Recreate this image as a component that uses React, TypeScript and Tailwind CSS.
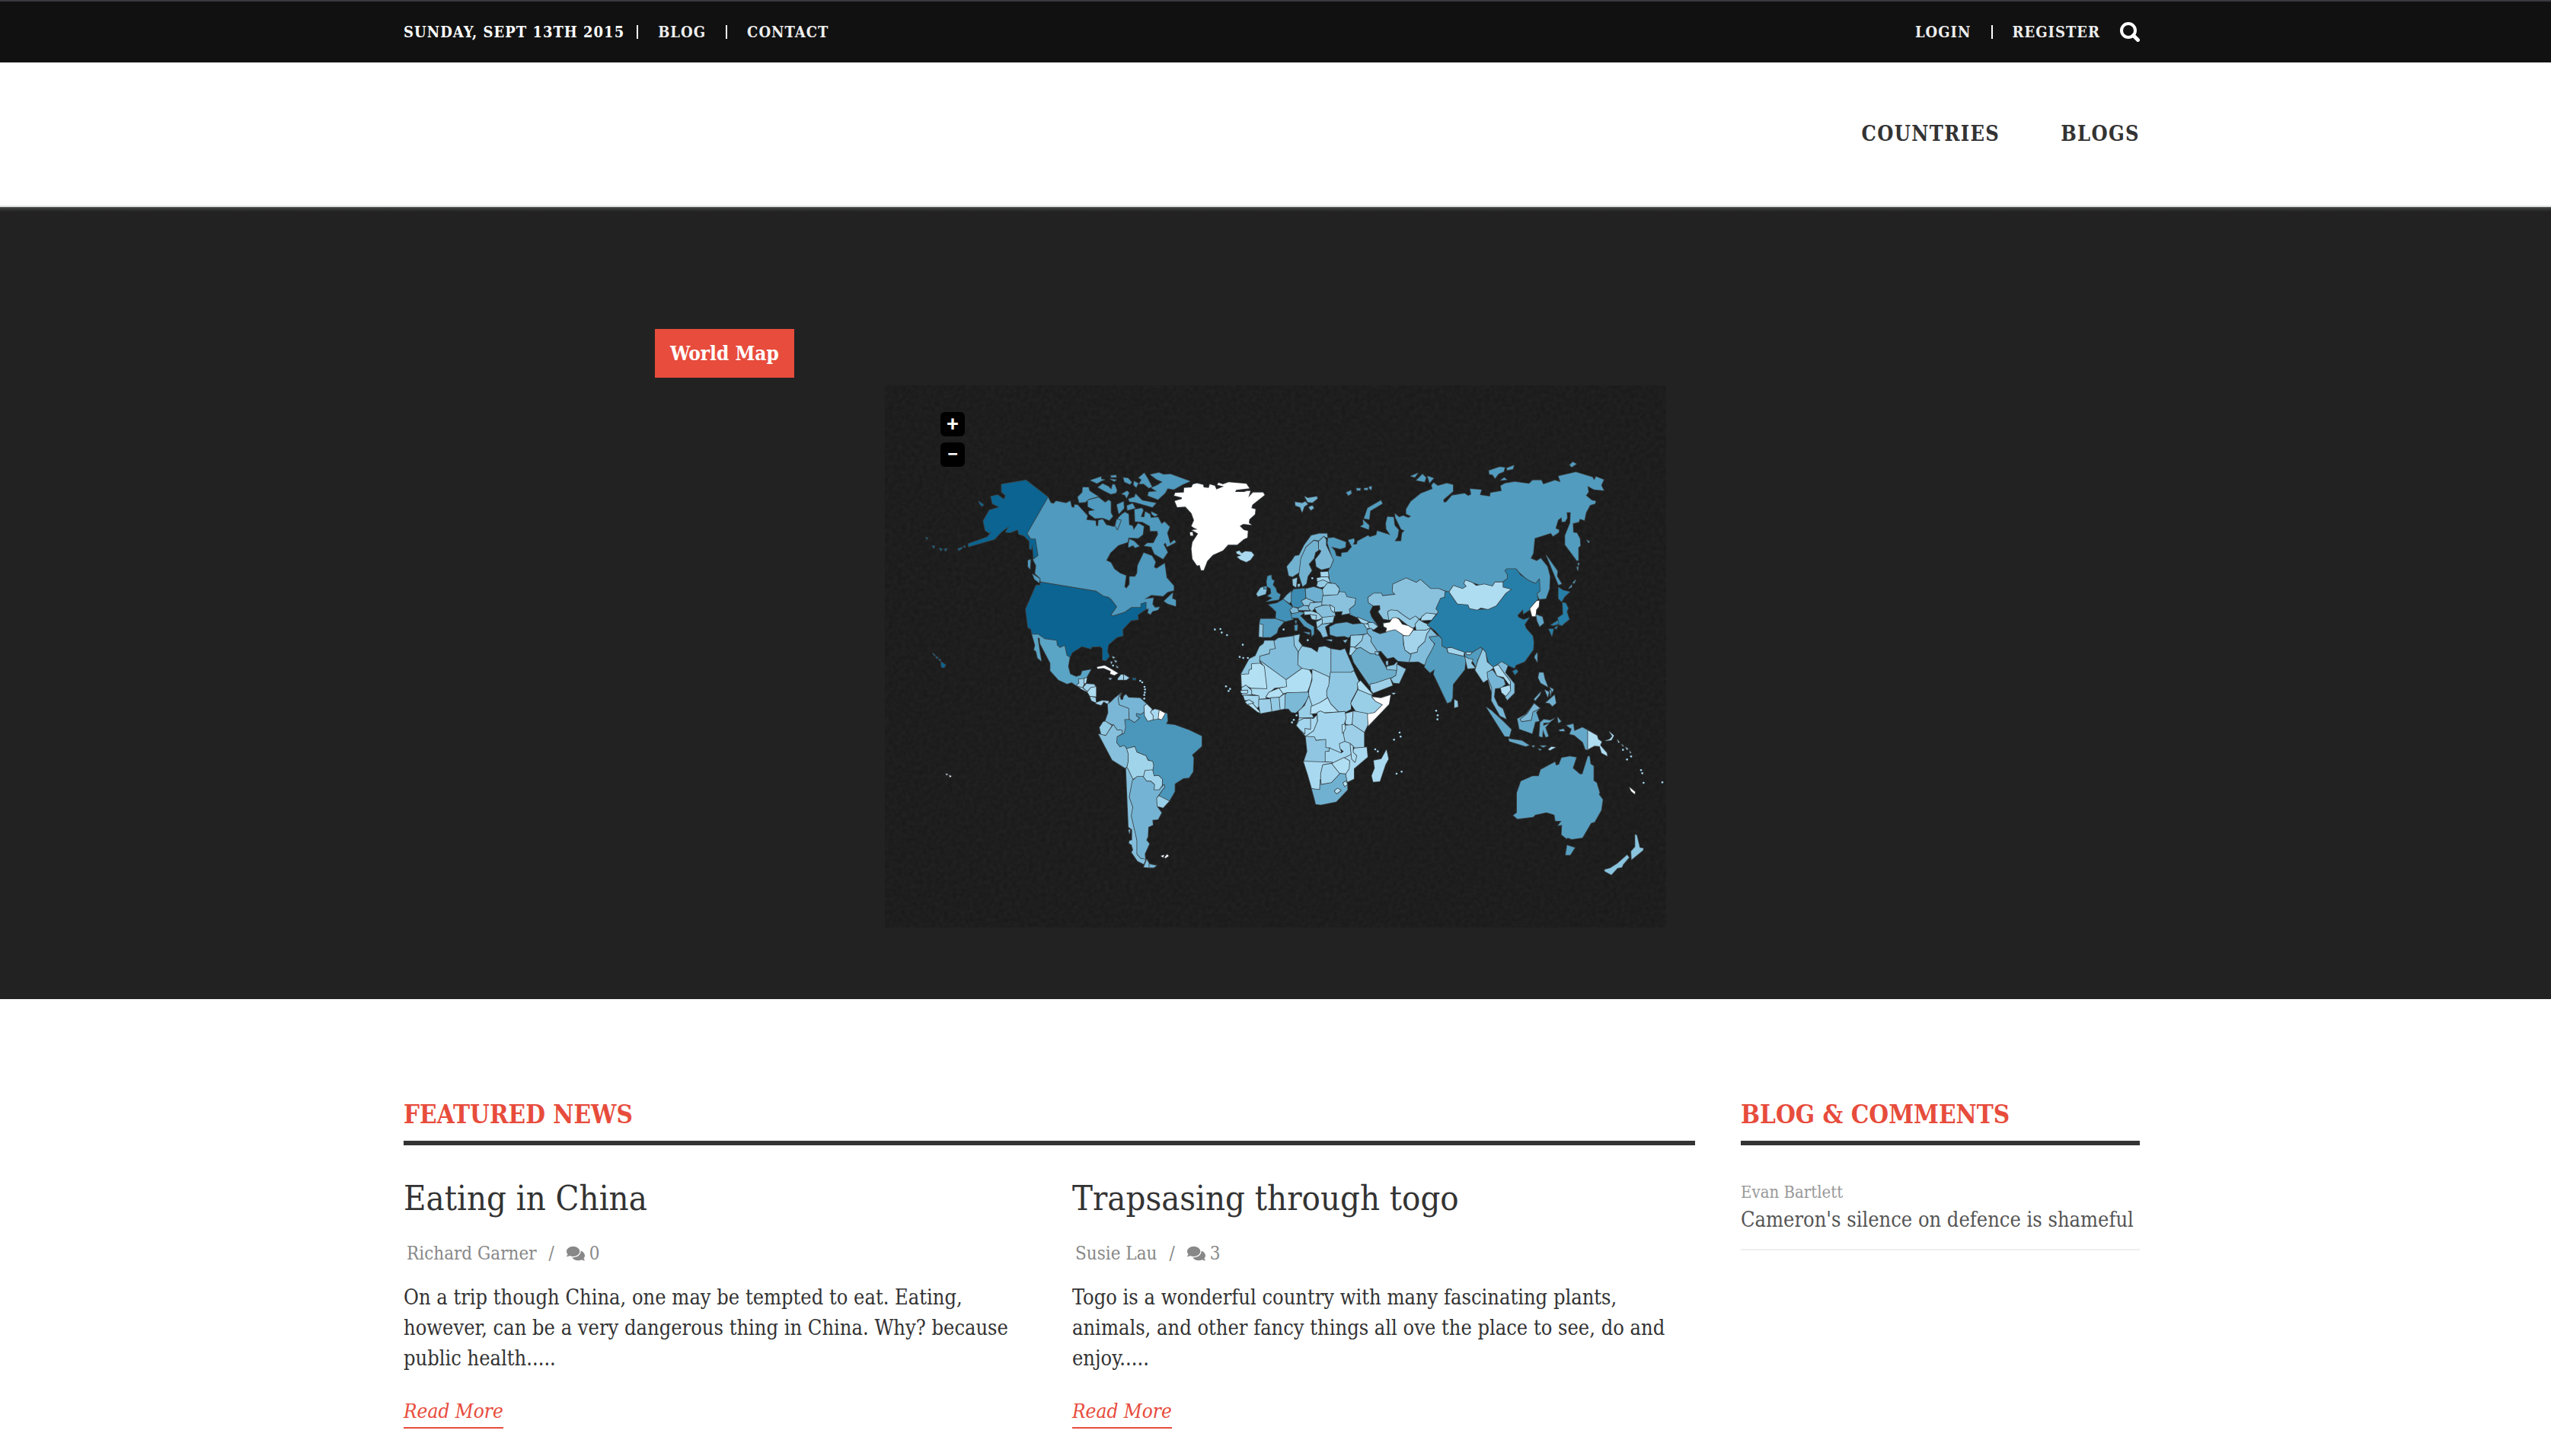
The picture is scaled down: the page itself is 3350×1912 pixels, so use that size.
import React from "react";
import { FaComments } from "react-icons/fa";

type Shape = [fill: string, ...points: string[]];
type Dot = [x: number, y: number];
type Region = { name: string; origin: string; shapes: Shape[]; dots?: Dot[] };

const regions: Region[] = [
  {
    name: "Russia",
    origin: "translate(1104 252)",
    shapes: [
      [
        "#529cbf",
        "642,350 664,348 712,366 710,386 690,392 672,388 654,384 668,400 674,420 694,424 696,408 718,406 736,384 722,358 744,352 746,362 740,376 756,374 758,362 800,340 806,346 832,338 836,322 888,338 872,314 870,292 876,266 900,268 904,300 920,318 916,344 904,362 930,362 934,330 944,320 930,314 908,270 906,254 922,268 938,262 958,270 970,264 950,254 950,236 968,206 1008,174 1054,156 1050,142 1058,132 1074,144 1110,134 1134,140 1134,166 1096,198 1098,210 1108,208 1130,182 1180,174 1194,184 1206,178 1202,156 1246,160 1240,180 1280,186 1282,172 1326,164 1322,144 1340,134 1378,128 1434,136 1448,122 1482,122 1490,138 1536,122 1558,130 1550,106 1618,90 1684,110 1690,122 1698,108 1728,120 1718,142 1728,162 1690,158 1664,144 1668,168 1658,182 1682,202 1696,204 1694,214 1674,220 1658,250 1652,280 1634,274 1630,286 1606,292 1608,328 1622,330 1634,352 1636,380 1628,386 1628,438 1622,438 1576,376 1576,340 1596,290 1598,248 1582,248 1584,270 1576,284 1564,286 1562,268 1548,278 1538,312 1552,318 1550,328 1528,342 1520,330 1456,350 1450,410 1440,430 1464,440 1480,430 1506,462 1516,500 1514,550 1500,588 1474,590 1464,568 1476,558 1474,512 1462,528 1430,516 1382,472 1346,472 1350,510 1330,524 1300,524 1290,540 1240,534 1184,516 1188,540 1172,550 1136,538 1118,562 1080,550 1046,550 1006,514 990,526 950,508 898,532 896,560 908,572 856,578 852,568 822,568 800,584 802,604 818,616 806,640 812,660 836,694 806,680 756,662 728,650 724,630 746,612 750,588 716,582 708,564 688,562 684,540 650,524 644,480 662,440 654,412 640,370",
        "714,170 732,162 734,174 722,182",
        "754,154 770,154 768,162 756,162",
        "784,154 798,152 798,160 786,160",
        "804,148 814,146 812,160 804,154",
        "784,272 798,232 850,202 856,214 808,242 804,276",
        "780,278 804,300 802,316 770,304 782,296",
        "968,106 996,94 984,110",
        "990,122 1014,98 1028,112 1022,128",
        "1034,106 1058,114 1042,132",
      ],
    ],
  },
  {
    name: "North America",
    origin: "translate(114 252)",
    shapes: [
      [
        "#4f9abe",
        "528,188 540,212 552,214 560,204 600,212 616,204 622,228 632,230 634,218 646,220 684,262 680,278 716,282 718,302 726,302 728,280 744,276 758,298 790,306 806,270 820,256 832,248 846,256 848,298 862,302 866,318 884,292 906,304 902,336 884,350 846,348 842,366 806,378 774,408 758,438 776,446 790,472 812,488 836,498 830,542 838,548 850,532 850,502 872,502 880,488 882,458 906,408 938,420 952,444 946,464 956,470 988,450 996,506 1024,538 1024,556 1000,562 982,578 936,574 908,590 944,586 940,610 950,624 968,622 962,632 940,638 932,650 922,644 926,628 914,630 914,604 896,610 896,624 858,624 830,644 782,658 776,652 798,620 766,584 748,580 718,560 500,524 498,508 478,490 482,458 470,434 488,418 478,354 460,354 445,332",
        "870,238 898,232 904,240 894,266 908,268 912,246 930,256 934,270 962,268 976,294 988,286 1008,306 998,330 1010,372 1026,358 1032,366 998,384 992,368 984,374 1000,406 982,432 948,412 936,384 908,380 920,370 944,370 962,336 960,322 932,322 930,302 900,286 872,284",
        "846,374 850,354 868,362 888,382 872,388 864,378 846,386",
        "686,200 728,190 754,210 768,200 776,206 776,250 784,264 770,280 744,270 714,272 690,254 690,244 714,240 686,226",
        "666,150 688,150 692,164 726,186 690,196 676,208 652,210 646,188 664,170",
        "696,122 738,108 738,118 752,120 740,124 722,134",
        "726,150 744,136 766,146 778,158 784,138 792,140 800,162 796,172 776,176 752,164",
        "776,104 796,102 798,110 778,110",
        "774,118 798,120 790,126",
        "826,112 844,114 858,130 852,138 830,128",
        "868,126 884,134 876,150 866,140",
        "820,176 840,164 848,172 838,192 832,180",
        "886,112 908,94 922,116 938,148 926,152 906,136 888,136 898,120",
        "932,100 966,92 984,100 1012,98 1088,126 1060,138 1024,158 1000,154 990,172 962,198 922,182 926,168 958,166 936,152 962,140 980,128 956,118",
        "846,196 870,188 874,176 900,202 954,212 940,228 870,208 850,206",
        "800,218 826,206 828,232 808,254",
        "840,222 862,214 872,232 842,240",
        "800,276 816,280 802,316 794,300",
        "936,246 960,258 950,264 938,256",
        "468,492 496,510 494,526 476,512",
        "450,438 460,434 458,472 450,462",
        "986,598 1020,566 1018,588 1032,594 1032,618 1000,608",
      ],
      [
        "#0b6491",
        "346,138 442,122 528,188 445,332 460,354 478,354 488,418 472,430 468,372 462,395 456,390 456,362 434,340 414,334 410,316 380,328 362,326 376,302 346,324 318,354 216,383 215,373 290,346 308,324 298,330 282,320 274,282 298,240 338,228 310,214 304,186 330,180 356,198 362,182 346,168",
        "256,205 274,218 270,224 262,218",
        "174,393 190,386 189,391 177,398",
        "500,524 718,560 748,580 766,584 778,594 798,620 776,652 782,658 830,644 858,624 896,624 896,610 914,604 914,630 882,652 884,670 856,674 822,710 824,734 800,740 766,770 762,796 770,816 756,832 744,830 744,786 736,776 700,778 698,786 662,776 624,800 614,820 602,812 594,774 576,782 564,772 562,754 516,748 490,730 466,730 462,708 450,702 441,630 482,536 498,536",
        "108,838 125,850 118,860 109,858",
        "75,804 84,811 80,812",
        "87,816 95,820 90,824",
        "98,826 106,830 103,834",
        "73,380 82,382 79,390",
        "101,390 112,393 107,399",
        "121,393 131,392 125,401",
        "48,347 54,349 52,355",
        "196,382 203,381 200,387",
        "862,902 874,902 874,908 864,908",
      ],
      [
        "#5aa4c6",
        "466,730 490,730 516,748 562,754 564,772 576,782 594,774 602,812 614,820 608,856 616,886 640,896 658,890 664,874 698,868 678,902 654,906 650,920 650,930 642,932 622,918 604,924 570,908 538,872 538,842 498,766 496,744 488,742 492,770 502,834 488,822 482,796 474,790 478,772",
      ],
      [
        "#9fd0e8",
        "650,906 672,904 672,922 664,940 650,936 642,930 652,922",
        "668,938 680,924 710,926 718,936 698,940 684,956",
        "650,936 664,940 684,956 660,944",
        "694,974 716,978 718,998 700,990",
        "718,998 742,990 768,992 766,1004 748,994 738,1008 718,1002",
        "804,904 816,888 826,888 826,908 804,908",
        "828,888 848,900 838,908 828,908",
        "768,902 780,902 774,908",
        "782,816 792,820 786,824",
        "790,832 800,834 796,840",
        "776,836 782,838 778,846",
        "798,852 806,860 800,860",
      ],
      ["#aedcf1", "672,904 682,900 678,922 672,922", "718,936 718,974 694,972 684,956 698,940"],
      ["#ffffff", "722,858 752,852 774,864 804,882 790,890 774,884 776,874 748,862 724,864"],
    ],
    dots: [[892, 912], [900, 918], [909, 936], [911, 946], [910, 958], [908, 968], [908, 982], [785, 852]],
  },
  {
    name: "South America",
    origin: "translate(534 942)",
    shapes: [
      ["#7ab6d5", "398,270 386,292 388,314 428,330 428,374 412,376 416,404 410,430 400,430 400,418 380,416 366,396 334,382 346,348 344,314 356,306 372,290"],
      ["#76b5d5", "398,270 392,284 396,298 404,296 408,282 416,276 426,288 472,290 498,314 488,322 488,346 472,368 450,388 430,376 428,330 390,316 386,292"],
      [
        "#4a97bb",
        "488,346 490,360 502,382 544,370 556,374 570,348 578,352 580,380 574,392 608,396 664,416 714,440 714,480 676,514 682,526 680,580 664,604 642,606 608,628 608,658 586,696 546,676 568,636 558,630 556,606 544,596 526,598 520,576 524,548 502,530 494,516 458,502 450,482 420,490 408,478 392,484 378,466 380,442 410,430 416,404 412,376 430,376 450,388 472,368 458,360 458,352 474,356",
      ],
      ["#b8e2f5", "498,314 518,334 514,346 524,358 524,374 502,380 490,360 488,322"],
      ["#a9d9f0", "518,340 530,334 548,338 544,372 524,374 524,358 514,346"],
      ["#ffffff", "548,338 570,350 556,374 544,370", "554,912 566,908 562,918", "568,918 578,906 584,912 572,920"],
      ["#86c0dc", "366,396 380,416 400,418 400,430 380,442 378,466 392,484 408,478 420,492 426,510 424,550 416,568 362,534 308,432 336,436 360,404"],
      ["#92cae4", "326,384 334,382 360,398 336,436 318,432 312,406"],
      ["#a0d4ea", "420,490 450,482 458,504 494,518 502,536 520,540 524,556 520,576 492,578 486,600 460,600 442,610 420,566 426,540 426,510"],
      [
        "#83bfdc",
        "416,566 422,568 442,610 446,618 436,640 430,682 444,724 438,758 460,852 462,906 474,922 494,924 486,944 462,932 438,898 444,888 438,868 428,862 430,852 440,850 440,808 426,798",
        "426,810 432,808 430,824",
        "498,926 508,944 508,958 486,956",
      ],
      [
        "#74b3d3",
        "460,600 486,600 498,616 514,616 530,630 528,650 546,650 566,632 568,640 540,678 540,720 556,742 542,768 520,770 522,790 504,798 502,836 496,850 508,864 490,904 492,924 474,920 460,904 460,850 438,754 444,720 430,680 442,616",
        "508,944 536,950 526,958 508,958",
      ],
      ["#9fd4ec", "492,576 520,574 526,598 544,596 558,610 558,634 546,650 528,650 530,630 514,616 498,616 486,600"],
      ["#99cfe8", "546,676 586,696 562,722 540,716 538,684"],
    ],
  },
  {
    name: "Europe and the Middle East",
    origin: "translate(1104 252)",
    shapes: [
      [
        "#ffffff",
        "75,152 104,150 110,138 126,134 150,140 152,150 172,152 176,138 196,144 202,158 232,146 206,140 210,132 228,138 250,130 320,136 332,154 280,160 276,168 312,168 322,164 336,164 328,190 346,170 386,170 392,180 344,218 340,232 356,236 354,256 332,276 330,290 340,298 308,294 294,302 310,318 326,322 324,348 310,354 284,376 248,376 228,398 188,416 166,440 152,476 142,476 136,456 126,458 108,432 104,392 108,366 130,332 106,318 128,316 112,308 104,302 114,280 104,252 80,226 48,228 38,204 66,196 66,190 36,182 40,172 74,170",
        "98,328 108,326 110,340 100,340",
        "860,686 886,682 896,666 908,664 920,670 934,690 958,696 978,708 962,736 936,732 906,712 880,718 870,722 874,704 862,698",
      ],
      ["#a9d9f0", "280,404 292,400 302,410 316,402 340,404 350,416 336,436 320,444 296,434 284,424 300,418 284,412"],
      [
        "#72b2d1",
        "512,208 540,212 552,206 562,216 548,226 540,248 532,228 514,222",
        "550,186 562,192 598,186 600,194 580,210 562,208",
        "566,228 580,222 586,232 574,240",
        "480,462 500,438 512,420 528,418 548,378 576,340 608,332 638,332 640,348 626,344 606,360 586,356 556,386 536,426 530,484 502,502 488,498",
        "586,360 602,364 606,396 592,406 586,430 566,452 578,478 562,500 556,530 542,540 528,496 536,430 556,386",
      ],
      ["#7bb7d5", "606,362 626,344 634,356 634,378 662,436 650,466 616,474 596,462 592,434 610,412 616,400 606,394"],
      ["#8fc6e0", "502,512 520,506 516,544 504,536", "522,532 532,530 530,540 524,542", "372,686 388,690 386,740 370,738"],
      ["#a3d6ee", "612,484 642,482 644,502 614,502", "598,508 616,504 642,504 650,524 600,522"],
      ["#93cae4", "602,522 622,516 646,526 636,540 610,544 598,538", "640,528 670,530 686,550 680,572 622,576 618,556"],
      ["#3b8bb2", "506,552 550,548 554,584 538,598 546,616 536,624 504,620 496,600 496,570"],
      ["#6dafd0", "554,550 586,542 618,552 624,590 616,602 590,600 556,586", "466,590 480,574 496,560 496,600 490,606"],
      ["#4190b8", "408,612 440,606 466,592 504,624 492,640 504,670 474,678 436,666 438,640 422,624"],
      [
        "#4695b9",
        "404,500 418,496 420,512 430,518 424,534 436,548 440,564 454,572 448,592 400,600 424,586 404,578 418,568 416,548 402,540 400,520",
        "386,542 400,540 400,552 386,550",
      ],
      ["#86c2de", "360,570 376,546 386,542 388,552 400,552 396,570 366,580"],
      ["#549dc0", "376,668 436,668 468,680 446,704 440,724 416,740 386,740 388,690 372,686"],
      [
        "#4e99bd",
        "498,648 522,640 548,644 532,656 560,684 586,700 586,728 578,736 576,712 548,696 524,664 500,664",
        "510,694 522,692 520,714 512,714",
        "512,676 518,676 516,688",
        "548,720 570,722 568,730",
      ],
      ["#7bb7d5", "492,634 504,622 524,628 524,642 500,646", "524,628 548,616 572,620 568,634 528,634"],
      ["#8cc4df", "538,598 556,588 584,600 570,614 548,614", "572,606 622,602 616,618 590,626 576,640 566,624"],
      ["#8ac2de", "622,578 680,574 688,562 708,564 716,582 750,588 746,612 724,630 728,646 696,652 700,638 668,640 652,616 618,612"],
      ["#86c0dc", "590,626 622,616 652,616 668,642 670,656 620,664 602,648"],
      ["#a9d9f0", "650,614 666,624 666,642 656,634"],
      ["#94cbe5", "616,664 666,658 660,682 618,688"],
      ["#9dd0e8", "548,640 578,638 604,648 618,664 606,670 592,672 572,650 550,652", "572,652 596,656 592,672 578,668", "596,680 618,670 618,686 600,704"],
      ["#82bddb", "598,706 618,690 650,686 630,700 640,736 622,740 612,720", "636,750 658,750 656,756", "702,754 718,750 710,762"],
      ["#64a8c9", "648,700 672,688 716,682 740,690 782,686 798,704 796,726 732,734 722,742 706,736 676,738 650,730"],
      ["#a3d6ee", "758,662 804,682 788,688 772,682", "784,688 800,690 808,706 794,704", "730,780 748,778 756,788 736,812 726,808"],
      ["#9acfe8", "800,684 820,684 838,698 822,710 806,704", "732,734 782,732 776,752 748,778 730,776"],
      ["#90c6e1", "782,732 798,726 814,744 812,758 840,798 828,808 808,806 770,782 748,782 776,754"],
      [
        "#8ac2de",
        "950,508 990,526 1006,514 1046,550 1078,550 1104,560 1100,584 1086,588 1068,626 1078,640 1066,650 1030,646 1012,660 1002,668 986,658 964,672 932,650 914,636 890,634 878,640 882,672 860,668 840,640 848,630 846,614 820,616 802,604 800,584 822,568 852,568 856,578 908,572 896,560 898,532",
      ],
      ["#94cbe5", "878,640 890,634 914,636 932,650 964,672 986,658 1002,672 994,690 976,704 958,694 920,664 882,672"],
      ["#ffffff", "860,686 886,682 896,666 908,664 920,670 934,690 958,696 978,708 962,736 936,732 906,712 880,718 870,722 874,704 862,698"],
      ["#a9d9f0", "1012,660 1030,646 1066,650 1050,672 1008,674"],
      ["#9ad0e8", "986,690 1000,672 1020,684 1042,692 1044,712 990,714"],
      ["#a3d4ec", "978,714 1026,714 1044,706 1030,730 1024,758 998,782 994,800 970,806 944,792 938,736 962,736"],
      ["#82bddb", "1046,708 1076,738 1054,750 1062,776 1050,802 1056,814 1034,846 1020,848 998,836 958,838 970,806 994,800 998,782 1024,758 1032,728"],
      ["#74b3d3", "796,712 812,706 818,716 846,728 870,722 880,718 906,712 936,732 938,770 944,792 968,810 960,838 918,834 900,818 876,824 850,794 838,796 812,756 814,742 798,724"],
      ["#6cadcc", "756,786 770,782 808,806 828,808 842,812 862,846 872,864 912,870 908,892 886,902 830,922 808,934 778,890 744,840 734,812"],
      ["#8ac4df", "874,866 874,856 902,850 914,838 914,870", "914,848 948,866 922,922 900,920 890,904 910,892 914,870", "870,836 878,834 878,850 872,850", "828,798 842,800 840,810 830,808"],
      ["#9dd0e8", "808,926 830,922 886,902 896,930 820,960 812,950"],
    ],
    dots: [[196, 710], [218, 708], [223, 722], [244, 732], [467, 710], [580, 508], [562, 752]],
  },
  {
    name: "Africa",
    origin: "translate(1314 882)",
    shapes: [
      ["#8fc6e0", "182,124 222,124 226,156 204,160 202,176 164,188 164,214 132,216 132,236 122,240 120,256 88,258 122,196 146,184 162,148 178,136"],
      ["#82bddb", "220,126 236,114 298,106 300,140 312,162 314,220 334,234 268,278 164,206 164,186 202,176 204,160 226,156", "442,156 480,162 498,156 508,180 534,240 522,250 442,250"],
      ["#93cae4", "298,104 320,100 316,126 330,144 316,168 300,142", "330,146 366,154 390,170 396,150 420,146 442,156 442,270 372,238 334,236 314,218 316,168"],
      ["#aadaf0", "164,204 268,280 270,306 222,310 200,328 186,352 162,354 158,340 130,334 128,312 190,310 180,224"],
      ["#b3e0f3", "90,258 120,256 122,240 132,236 132,216 164,214 180,226 190,312 128,310 108,300 92,306"],
      ["#b0dff3", "268,278 330,234 358,240 370,262 360,300 350,326 272,328 254,332 238,312 270,306"],
      ["#a9d9f0", "370,238 436,268 436,300 428,320 432,346 400,370 366,384 354,350 358,318 370,280"],
      ["#90c8e3", "442,250 522,250 534,244 552,282 546,318 522,362 522,394 502,404 472,404 440,372 428,340 428,320 436,300"],
      ["#7cb9d6", "270,330 354,328 356,346 326,390 304,408 288,406 276,392 258,392 262,340"],
      ["#a3d6ee", "92,310 108,300 130,320 130,336 94,338", "98,340 158,342 162,380 150,390 134,384 120,360 104,358", "238,348 262,334 260,392 242,396"],
      ["#aadaf0", "106,366 120,358 138,368 118,378", "88,322 114,320 114,330 90,330"],
      ["#b3e0f3", "118,376 134,372 168,410 154,404", "188,346 200,328 238,312 254,334 240,346 206,350"],
      ["#9dd0e8", "160,356 206,354 210,402 166,410 160,380"],
      ["#93cae4", "206,350 238,348 242,396 212,402"],
      ["#9acfe8", "316,402 340,380 356,344 368,380 362,402 374,426 318,428", "550,318 598,330 608,350 650,376 612,410 580,416 540,400 522,372"],
      ["#b3e0f5", "366,384 402,368 430,350 442,374 472,404 402,408 364,412"],
      ["#b0dff3", "552,316 548,292 560,282 608,336 594,334"],
      ["#ffffff", "606,346 640,350 678,338 672,374 590,460 586,414 616,408 648,376 620,362"],
      ["#a9d9f0", "500,412 534,402 530,440 522,458 502,452", "318,430 362,430 374,432 388,418 390,450 374,480 344,500 308,458"],
      ["#a3d6ee", "336,432 362,432 362,472 340,468 340,490 322,474 308,458 318,440"],
      ["#9dd0e8", "532,402 586,412 588,456 574,486 528,456", "500,458 528,456 574,486 574,546 540,548 520,530 498,522 490,488"],
      ["#a3d6ee", "390,408 402,402 420,410 498,404 502,430 490,470 492,496 498,524 478,536 484,568 440,548 422,546 420,514 382,516 378,504 344,502 376,480 392,440"],
      ["#90c6e1", "344,502 378,504 384,518 422,514 422,546 440,548 438,560 420,562 420,602 336,602 350,560"],
      ["#a3d6ee", "438,548 484,568 494,560 480,548 478,530 498,522 520,530 522,574 494,588 466,606 422,600 422,562 438,560"],
      ["#a9d9f0", "522,574 536,548 584,544 588,582 534,628 534,668 506,682 500,650 516,620 514,598 494,588"],
      ["#aadaf0", "520,532 530,540 530,564 544,578 538,602 526,590"],
      ["#a9d9f0", "336,600 448,604 410,622 404,650 400,712 368,706 352,650"],
      ["#a3d6ee", "412,614 448,608 480,648 446,686 404,692 404,648"],
      ["#b0dff3", "448,608 494,586 516,598 514,628 500,650 478,646", "488,456 498,454 500,470 490,488"],
      ["#70b1d1", "368,708 400,712 402,672 404,692 446,684 480,648 500,650 508,690 508,712 464,758 404,770 384,768 378,744"],
      ["#b3e0f3", "458,716 470,706 482,714 466,726", "492,684 502,678 508,690 498,698"],
      ["#aadaf0", "612,596 642,590 662,554 670,590 658,612 636,678 610,680 604,656 616,626", "684,330 698,330 690,336"],
    ],
    dots: [[30, 304], [46, 314], [40, 322], [96, 140], [84, 188], [98, 192], [116, 192], [308, 418], [297, 436], [290, 446], [618, 552], [628, 560], [714, 486], [718, 502], [692, 514], [702, 648], [722, 640]],
  },
  {
    name: "Asia",
    origin: "translate(2154 252)",
    shapes: [
      [
        "#529cbf",
        "226,84 268,70 288,72 284,88 264,96 250,114 240,100 228,98",
        "296,74 324,64 320,78 298,82",
        "272,122 286,112 296,120",
        "544,62 556,50 570,58 552,70",
        "452,418 496,480 494,500 512,530 500,534",
        "540,548 552,534 552,542",
        "556,526 568,514 562,528",
        "576,448 582,450 578,458",
        "572,464 578,464 576,478",
        "612,358 622,364 618,368",
        "-8,740 28,736 42,750 44,776 60,784 62,800 128,814 134,830 130,868 84,926 82,980 76,994 62,1000 8,886 12,866 -6,880 -28,858 -18,826 0,795 14,766 0,752",
        "130,800 158,800 194,778 202,796 180,830 176,860 166,840 134,818",
      ],
      [
        "#267fa8",
        "280,524 300,510 300,494 290,478 296,472 332,472 350,496 380,516 404,528 412,528 424,512 426,558 414,568 418,590 386,634 384,634 362,648 360,630 338,654 342,662 362,672 384,664 366,690 372,706 398,736 402,760 400,790 366,836 332,850 326,862 298,850 276,838 240,858 224,838 212,796 194,778 158,800 128,802 60,784 42,774 42,746 14,714 -16,692 0,676 20,652 28,640 18,628 36,588 52,584 54,562 70,562 102,608 144,612 180,632 222,630 254,616 300,560 312,552 280,548",
        "320,874 334,868 340,876 328,888",
        "516,604 528,606 538,626 532,640 542,670 524,684 514,694 500,690 498,664 518,650",
        "500,544 518,556 544,562 524,580 512,600 500,588",
        "470,692 498,674 500,688 480,694",
        "462,708 480,708 474,736",
        "484,704 496,696 492,708",
      ],
      ["#aedcf1", "70,562 86,538 122,550 138,540 128,528 134,516 160,526 176,538 208,532 240,540 250,524 280,524 280,544 312,552 292,566 254,616 222,630 194,624 180,632 150,626 144,612 102,608"],
      ["#ffffff", "414,598 424,596 422,620 412,632 410,658 396,658 388,628"],
      ["#5fa6c8", "412,652 436,660 442,684 426,698 416,676", "408,812 416,802 416,838 406,820"],
      ["#a3d6ee", "62,784 78,782 128,800 126,814 66,800", "136,800 158,800 152,808 138,808"],
      ["#8fc6e0", "132,818 146,826 162,828 156,842 172,862 142,864", "90,986 102,992 104,1014 90,1018"],
      ["#93cae4", "202,788 212,800 218,838 244,860 220,880 236,920 242,966 234,950 222,906 204,918 172,870 184,830"],
      ["#82bddb", "260,848 276,838 300,852 290,880 326,924 326,960 298,988 290,974 312,950 310,914 280,876"],
      ["#76b5d5", "220,878 240,870 256,892 284,906 290,926 272,940 250,942 246,976 262,1010 280,1022 294,1062 270,1050 236,990 238,940 222,900"],
      ["#aedcf1", "244,858 262,850 280,876 310,916 308,930 284,898 258,892", "272,940 308,930 310,950 292,972 276,958"],
      [
        "#6fb0d0",
        "424,880 440,880 446,906 458,936 430,920 420,900",
        "450,998 484,968 490,1000 476,1012 464,1000",
        "446,948 462,956 458,976",
        "466,948 472,952 468,972",
        "404,984 430,956 426,968 408,990",
        "466,938 480,946 476,956",
      ],
      [
        "#64a8c9",
        "216,1016 236,1030 280,1070 314,1104 306,1132 288,1130",
        "338,1062 372,1044 404,1002 426,1020 412,1036 424,1070 408,1074 396,1120 346,1102",
        "428,1076 442,1064 468,1068 484,1060 464,1076 440,1078 440,1090 462,1080 448,1096 460,1130 450,1134 438,1104 436,1134 424,1130",
        "496,1056 510,1072 500,1078",
        "502,1106 520,1102 524,1110 506,1110",
      ],
      ["#7bb7d5", "350,1064 378,1042 404,1002 426,1020 398,1034 392,1066 356,1072"],
    ],
    dots: [[18, 1030], [24, 1048], [23, 1064]],
  },
  {
    name: "Oceania",
    origin: "translate(2154 1002)",
    shapes: [
      [
        "#64a8c9",
        "304,390 314,392 356,398 384,416 370,420 306,400",
        "396,418 406,418 400,424",
        "428,418 452,418 440,424",
        "420,430 432,432 428,436",
        "532,338 558,332 562,360 594,346 616,358 616,434 606,432 596,404 562,376 544,372 552,352",
      ],
      [
        "#aedcf1",
        "616,358 652,378 656,392 670,402 664,416 690,446 692,458 670,446 662,420 642,418 616,432",
        "684,398 702,392 712,380 700,362 718,378 708,396",
        "460,432 472,422 488,424 466,436",
        "732,394 740,404 736,406",
        "764,424 774,430 770,434",
        "748,412 756,418 754,420",
        "780,438 786,446 782,446",
      ],
      [
        "#579fc1",
        "336,604 352,558 398,538 422,538 430,512 486,482 490,496 502,492 512,466 544,460 570,464 556,506 584,530 594,530 616,460 622,460 626,490 638,498 638,556 650,564 662,604 658,608 674,630 668,672 642,718 628,722 594,780 552,786 536,780 532,784 512,768 514,730 498,732 512,714 488,714 484,690 452,680 408,690 400,698 338,706 322,692 336,682",
        "534,810 564,820 546,848 528,848",
      ],
      ["#8ac4df", "802,768 808,770 820,820 834,822 832,830 788,866 786,834 802,816", "682,906 704,900 732,882 770,848 778,858 754,886 750,896 732,900 708,926 682,912"],
      ["#ffffff", "780,582 802,600 800,608 786,596"],
    ],
    dots: [[754, 434], [786, 460], [770, 472], [825, 514], [830, 526], [835, 564], [909, 562]],
  },
  {
    name: "Polynesia",
    origin: "translate(240 1530)",
    shapes: [["#ffffff", "0,0 8,2 4,6", "14,6 22,10 16,14"]],
  },
];

const WorldMap = () => {
  return (
    <svg viewBox="0 0 3078 2136" className="block w-full" role="img" aria-label="World map">
      <filter id="grain" x="0" y="0" width="100%" height="100%">
        <feTurbulence type="fractalNoise" baseFrequency="0.06" numOctaves="2" />
        <feColorMatrix values="0 0 0 0 1  0 0 0 0 1  0 0 0 0 1  .05 0 0 0 -.01" />
      </filter>
      <rect width="3078" height="2136" fill="#1a1a1a" />
      <rect width="3078" height="2136" filter="url(#grain)" />
      {regions.map((region) => (
        <g
          key={region.name}
          transform={region.origin}
          stroke="#3a4145"
          strokeWidth="5"
          strokeLinejoin="round"
          paintOrder="stroke"
        >
          {region.shapes.map(([fill, ...areas]) =>
            areas.map((points) => <polygon key={points} points={points} fill={fill} />)
          )}
          {region.dots?.map(([x, y]) => (
            <circle key={`${x}-${y}`} cx={x} cy={y} r="4" fill="#9fd0e8" stroke="none" />
          ))}
        </g>
      ))}
    </svg>
  );
};

const SearchIcon = () => {
  return (
    <svg viewBox="0 0 26 26" className="size-[26px]" fill="none" stroke="currentColor" strokeWidth="4">
      <circle cx="11" cy="11" r="9" />
      <path d="M17.5 17.5 L23.5 23.5" strokeWidth="5" strokeLinecap="round" />
    </svg>
  );
};

const Separator = () => <span className="h-[18px] w-[2px] bg-white" />;

const articles = [
  {
    title: "Eating in China",
    author: "Richard Garner",
    comments: 0,
    text: "On a trip though China, one may be tempted to eat. Eating, however, can be a very dangerous thing in China. Why? because public health.....",
  },
  {
    title: "Trapsasing through togo",
    author: "Susie Lau",
    comments: 3,
    text: "Togo is a wonderful country with many fascinating plants, animals, and other fancy things all ove the place to see, do and enjoy.....",
  },
];

const SectionTitle = ({ children }: { children: React.ReactNode }) => {
  return (
    <h2 className="border-b-[6px] border-[#333] pb-[10px] text-[33px] leading-[48px] font-bold text-[#e74c3c] uppercase whitespace-nowrap">
      {children}
    </h2>
  );
};

const App = () => {
  return (
    <div className="bg-white font-['Roboto_Slab','DejaVu_Serif_Condensed','DejaVu_Serif',serif] text-[#333]">
      <div className="border-t-2 border-[#3a3a42] bg-[#111] pr-2.5">
        <div className="mx-auto flex h-20 max-w-[2280px] items-center justify-between text-[20px] font-bold tracking-wider text-[#eee] uppercase">
          <div className="flex items-center gap-[26px]">
            <div className="flex items-center gap-4 text-white">
              <span>Sunday, Sept 13th 2015</span>
              <Separator />
            </div>
            <a href="#blog">Blog</a>
            <Separator />
            <a href="#contact">Contact</a>
          </div>
          <div className="flex items-center gap-[26px]">
            <a href="#login">Login</a>
            <Separator />
            <a href="#register">Register</a>
            <button type="button" aria-label="Search" className="text-white">
              <SearchIcon />
            </button>
          </div>
        </div>
      </div>

      <header className="border-b-2 border-[#dcdfdd] pr-2.5">
        <nav className="mx-auto flex h-[188px] max-w-[2280px] items-center justify-end gap-20 text-[27px] font-bold tracking-wider uppercase">
          <a href="#countries">Countries</a>
          <a href="#blogs">Blogs</a>
        </nav>
      </header>

      <section className="bg-[#222] bg-linear-to-b from-[#444746] to-[#222] to-[6px] pt-40 pb-[94px]">
        <div className="mx-auto max-w-[1630px]">
          <h1 className="w-fit bg-[#e74c3c] px-5 text-[26px] leading-[64px] font-bold text-white">World Map</h1>
          <div className="relative mx-auto mt-2.5 max-w-[1026px]">
            <WorldMap />
            <div className="absolute top-[35px] left-[73px] flex flex-col gap-2">
              {["+", "−"].map((sign) => (
                <button
                  key={sign}
                  type="button"
                  aria-label={sign === "+" ? "Zoom in" : "Zoom out"}
                  className="flex size-8 items-center justify-center rounded-md bg-black font-['Roboto',sans-serif] text-[28px] leading-8 font-medium text-white"
                >
                  {sign}
                </button>
              ))}
            </div>
          </div>
        </div>
      </section>

      <main className="pr-2.5">
        <div className="mx-auto grid max-w-[2280px] grid-cols-[1fr_524px] gap-[60px] pt-32 pb-9">
          <section>
            <SectionTitle>Featured News</SectionTitle>
            <div className="grid grid-cols-2 gap-[60px] pt-10">
              {articles.map((article) => (
                <article key={article.title}>
                  <h3 className="text-[45px] leading-[60px]">{article.title}</h3>
                  <div className="mt-6 flex items-center px-1 text-[24px] leading-[36px] text-[#888]">
                    <span>{article.author}</span>
                    <span className="px-4">/</span>
                    <FaComments className="mr-1.5 size-6" />
                    <span>{article.comments}</span>
                  </div>
                  <p className="mt-5 text-[27px] leading-[40px]">{article.text}</p>
                  <a
                    href="#article"
                    className="mt-7 inline-block border-b-2 border-[#e74c3c] text-[26px] leading-[42px] text-[#e74c3c] italic"
                  >
                    Read More
                  </a>
                </article>
              ))}
            </div>
          </section>

          <aside>
            <SectionTitle>Blog &amp; Comments</SectionTitle>
            <div className="border-b-2 border-[#eee] pt-[44px] pb-5">
              <p className="text-[22px] leading-[36px] text-[#999]">Evan Bartlett</p>
              <a href="#comment" className="block text-[27px] leading-[36px] whitespace-nowrap text-[#555]">
                Cameron's silence on defence is shameful
              </a>
            </div>
          </aside>
        </div>
      </main>
    </div>
  );
};

export default App;
